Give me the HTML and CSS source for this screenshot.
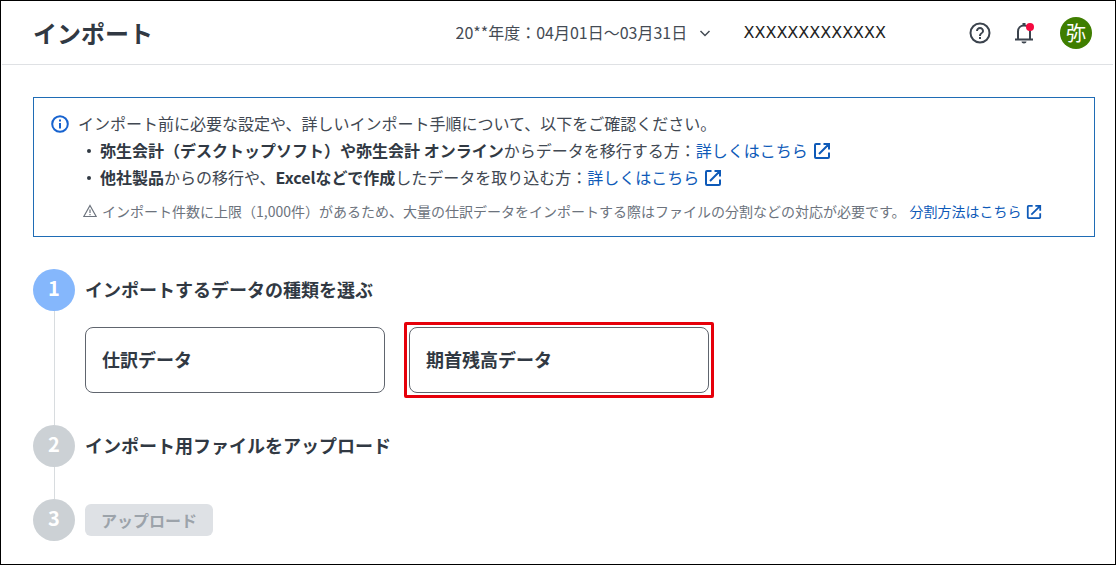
FILE: index.html
```html
<!DOCTYPE html>
<html lang="ja">
<head>
<meta charset="utf-8">
<meta name="viewport" content="width=device-width, initial-scale=1">
<title>インポート</title>
<link rel="stylesheet" href="styles.css">
</head>
<body class="page">
<svg width="0" height="0" class="sprite" aria-hidden="true">
  <symbol id="external" viewBox="0 0 18 18">
    <path d="M7.5 2H3Q2 2 2 3V15Q2 16 3 16H15Q16 16 16 15V10.5M10.5 2H16V7.5M16 2L6 12" fill="none" stroke="currentColor" stroke-width="2"/>
  </symbol>
</svg>
<header class="header">
  <h1 class="header-title">インポート</h1>
  <div class="period">
    <select class="period-select" aria-label="会計年度">
      <option>20**年度：04月01日～03月31日</option>
    </select>
    <svg class="period-arrow" viewBox="0 0 16 16" aria-hidden="true"><path d="M3.5 6L8 10.500L12.500 6" fill="none" stroke="currentColor" stroke-width="1.500"/></svg>
  </div>
  <span class="company">XXXXXXXXXXXXX</span>
  <div class="tools">
    <button class="icon-button" type="button" aria-label="ヘルプ">
      <svg viewBox="0 0 24 24" aria-hidden="true"><circle cx="12" cy="12" r="9.500" fill="none" stroke="currentColor" stroke-width="2"/><path fill="currentColor" d="M11 18h2v-2h-2v2zM12 6c-2.210 0-4 1.790-4 4h2c0-1.100.9-2 2-2s2 .9 2 2c0 2-3 1.750-3 5h2c0-2.250 3-2.500 3-5 0-2.210-1.790-4-4-4z"/></svg>
    </button>
    <button class="icon-button" type="button" aria-label="お知らせ">
      <svg viewBox="0 0 24 24" aria-hidden="true"><path d="M3 18.500H21M6 18V10.500C6 7 8.500 4.500 12 4.500S18 7 18 10.500V18" fill="none" stroke="currentColor" stroke-width="2"/><path d="M10.500 2h3v3h-3zM9.500 20.500h5c0 1.300-1.100 2-2.500 2s-2.500-.7-2.500-2z" fill="currentColor"/><circle cx="18" cy="6" r="4" fill="#f5093f"/></svg>
    </button>
  </div>
  <button class="avatar" type="button">弥</button>
</header>
<main class="content">
  <section class="notice">
    <svg class="notice-icon" viewBox="0 0 20 20" aria-hidden="true"><circle cx="10" cy="10" r="7.800" fill="none" stroke="currentColor" stroke-width="2"/><path d="M9 5.500h2v2H9zM9 9h2v5.500H9z" fill="currentColor"/></svg>
    <div class="notice-body">
      <p class="notice-lead">インポート前に必要な設定や、詳しいインポート手順について、以下をご確認ください。</p>
      <ul class="notice-list">
        <li><strong>弥生会計（デスクトップソフト）や弥生会計 オンライン</strong>からデータを移行する方：<a class="link" href="#desktop">詳しくはこちら<svg class="link-icon" aria-hidden="true"><use href="#external"/></svg></a></li>
        <li><strong>他社製品</strong>からの移行や、<strong>Excelなどで作成</strong>したデータを取り込む方：<a class="link" href="#other">詳しくはこちら<svg class="link-icon" aria-hidden="true"><use href="#external"/></svg></a></li>
      </ul>
      <p class="notice-note">
        <svg class="note-icon" viewBox="0 0 14 14" aria-hidden="true"><path d="M7 1.500L13.200 12.500H.8z" fill="none" stroke="currentColor" stroke-width="1.200"/><path d="M7 5.500V9M7 10v1.200" stroke="currentColor" stroke-width="1.200"/></svg>
        <span>インポート件数に上限（1,000件）があるため、大量の仕訳データをインポートする際はファイルの分割などの対応が必要です。</span>
        <a class="link note-link" href="#split">分割方法はこちら<svg class="link-icon link-icon-small" aria-hidden="true"><use href="#external"/></svg></a>
      </p>
    </div>
  </section>
  <ol class="steps">
    <li class="step">
      <div class="step-rail"><span class="step-number step-number-active">1</span></div>
      <div class="step-body step-choices">
        <h2 class="step-title">インポートするデータの種類を選ぶ</h2>
        <div class="choices">
          <button class="choice" type="button">仕訳データ</button>
          <div class="choice-highlight"><button class="choice" type="button">期首残高データ</button></div>
        </div>
      </div>
    </li>
    <li class="step">
      <div class="step-rail"><span class="step-number">2</span></div>
      <div class="step-body">
        <h2 class="step-title">インポート用ファイルをアップロード</h2>
      </div>
    </li>
    <li class="step">
      <div class="step-rail"><span class="step-number">3</span></div>
      <div class="step-body step-action">
        <button class="upload" type="button" disabled>アップロード</button>
      </div>
    </li>
  </ol>
</main>
</body>
</html>
```
FILE: styles.css
```css
* {
  box-sizing: border-box;
}

.page {
  margin: 0;
  min-height: 100vh;
  border: 1px solid #000;
  background: #fff;
  color: #313943;
  font: 16px/27px "Noto Sans CJK JP", sans-serif;
}

.sprite {
  position: absolute;
}

button,
select {
  font-family: inherit;
  color: inherit;
}

.header {
  display: flex;
  align-items: center;
  height: 64px;
  margin: 0 2px 0 1px;
  padding: 0 21px 0 31px;
  border-bottom: 1px solid #dfe1e4;
}

.header-title {
  margin: 0 auto 0 0;
  font-size: 24px;
  line-height: 36px;
  font-weight: 700;
}

.period {
  display: grid;
  align-items: center;
  margin-right: 31px;
  color: #444b54;
}

.period-select {
  grid-area: 1 / 1;
  appearance: none;
  margin: 0;
  padding: 0 25px 2px 0;
  border: 0;
  background: none;
  font-size: 16px;
  line-height: 24px;
}

.period-arrow {
  grid-area: 1 / 1;
  justify-self: end;
  width: 16px;
  height: 16px;
  pointer-events: none;
}

.company {
  margin-right: 82px;
  color: #222;
  font-family: "DejaVu Sans", sans-serif;
}

.tools {
  display: flex;
  gap: 20px;
  margin-right: 24px;
}

.icon-button {
  width: 24px;
  height: 24px;
  padding: 0;
  border: 0;
  background: none;
  color: #3b434d;
}

.icon-button svg {
  display: block;
}

.avatar {
  width: 32px;
  height: 32px;
  padding: 0;
  border: 0;
  border-radius: 50%;
  background: #3f7e00;
  color: #fff;
  font-size: 20px;
  line-height: 32px;
}

.content {
  padding: 32px 20px 23px 32px;
}

.notice {
  display: flex;
  gap: 8px;
  padding: 12px 16px 15px;
  border: 1px solid #1f6cb5;
}

.notice-icon {
  flex: none;
  width: 20px;
  height: 20px;
  margin-top: 4px;
  color: #1763cf;
}

.notice-lead {
  margin: 0;
  color: #414852;
}

.notice-list {
  margin: 0;
  padding-left: 9px;
  color: #414852;
  list-style: none;
}

.notice-list li::before {
  content: "";
  display: inline-block;
  width: 4px;
  height: 4px;
  margin-right: 9px;
  border-radius: 50%;
  background: #313943;
  vertical-align: 4px;
}

.notice-list strong {
  color: #313943;
}

.link {
  color: #0e5ab8;
  text-decoration: none;
}

.link-icon {
  width: 18px;
  height: 18px;
  margin-left: 5px;
  vertical-align: -3px;
}

.link-icon-small {
  width: 16px;
  height: 16px;
  margin-left: 4px;
}

.notice-note {
  display: flex;
  align-items: center;
  margin: 10px 0 0 5px;
  color: #6c737d;
  font-size: 14px;
  line-height: 20px;
}

.note-icon {
  flex: none;
  width: 14px;
  height: 14px;
  margin-right: 5px;
}

.note-link {
  margin-left: 4px;
}

.steps {
  margin: 32px 0 0;
  padding: 0;
  list-style: none;
}

.step {
  display: flex;
  gap: 10px;
}

.step-rail {
  display: flex;
  flex-direction: column;
  align-items: center;
}

.step:not(:last-child) .step-rail::after {
  content: "";
  flex: 1;
  width: 1px;
  background: #d8dcdf;
}

.step-number {
  width: 42px;
  height: 42px;
  border-radius: 50%;
  background: #ccd1d5;
  color: #fff;
  font-size: 20px;
  line-height: 38px;
  font-weight: 700;
  text-align: center;
}

.step-number-active {
  background: #85b7fc;
}

.step-body {
  flex: 1;
  padding-bottom: 34px;
}

.step-choices {
  padding-bottom: 27px;
}

.step-title {
  margin: 0;
  font-size: 18px;
  line-height: 40px;
  font-weight: 700;
}

.choices {
  display: flex;
  align-items: center;
  gap: 19px;
  margin-top: 13px;
}

.choice {
  width: 300px;
  height: 66px;
  padding: 0 16px 2px;
  border: 1px solid #60656e;
  border-radius: 8px;
  background: #fff;
  font-size: 18px;
  font-weight: 700;
  text-align: left;
}

.choice-highlight {
  display: flex;
  padding: 2px;
  border: 3px solid #e6000a;
  border-radius: 2px;
}

.step-action {
  padding: 5px 0 0;
}

.upload {
  height: 32px;
  padding: 0 16px;
  border: 0;
  border-radius: 6px;
  background: #dee1e5;
  color: #9ca3aa;
  font-size: 16px;
  font-weight: 700;
}
```
